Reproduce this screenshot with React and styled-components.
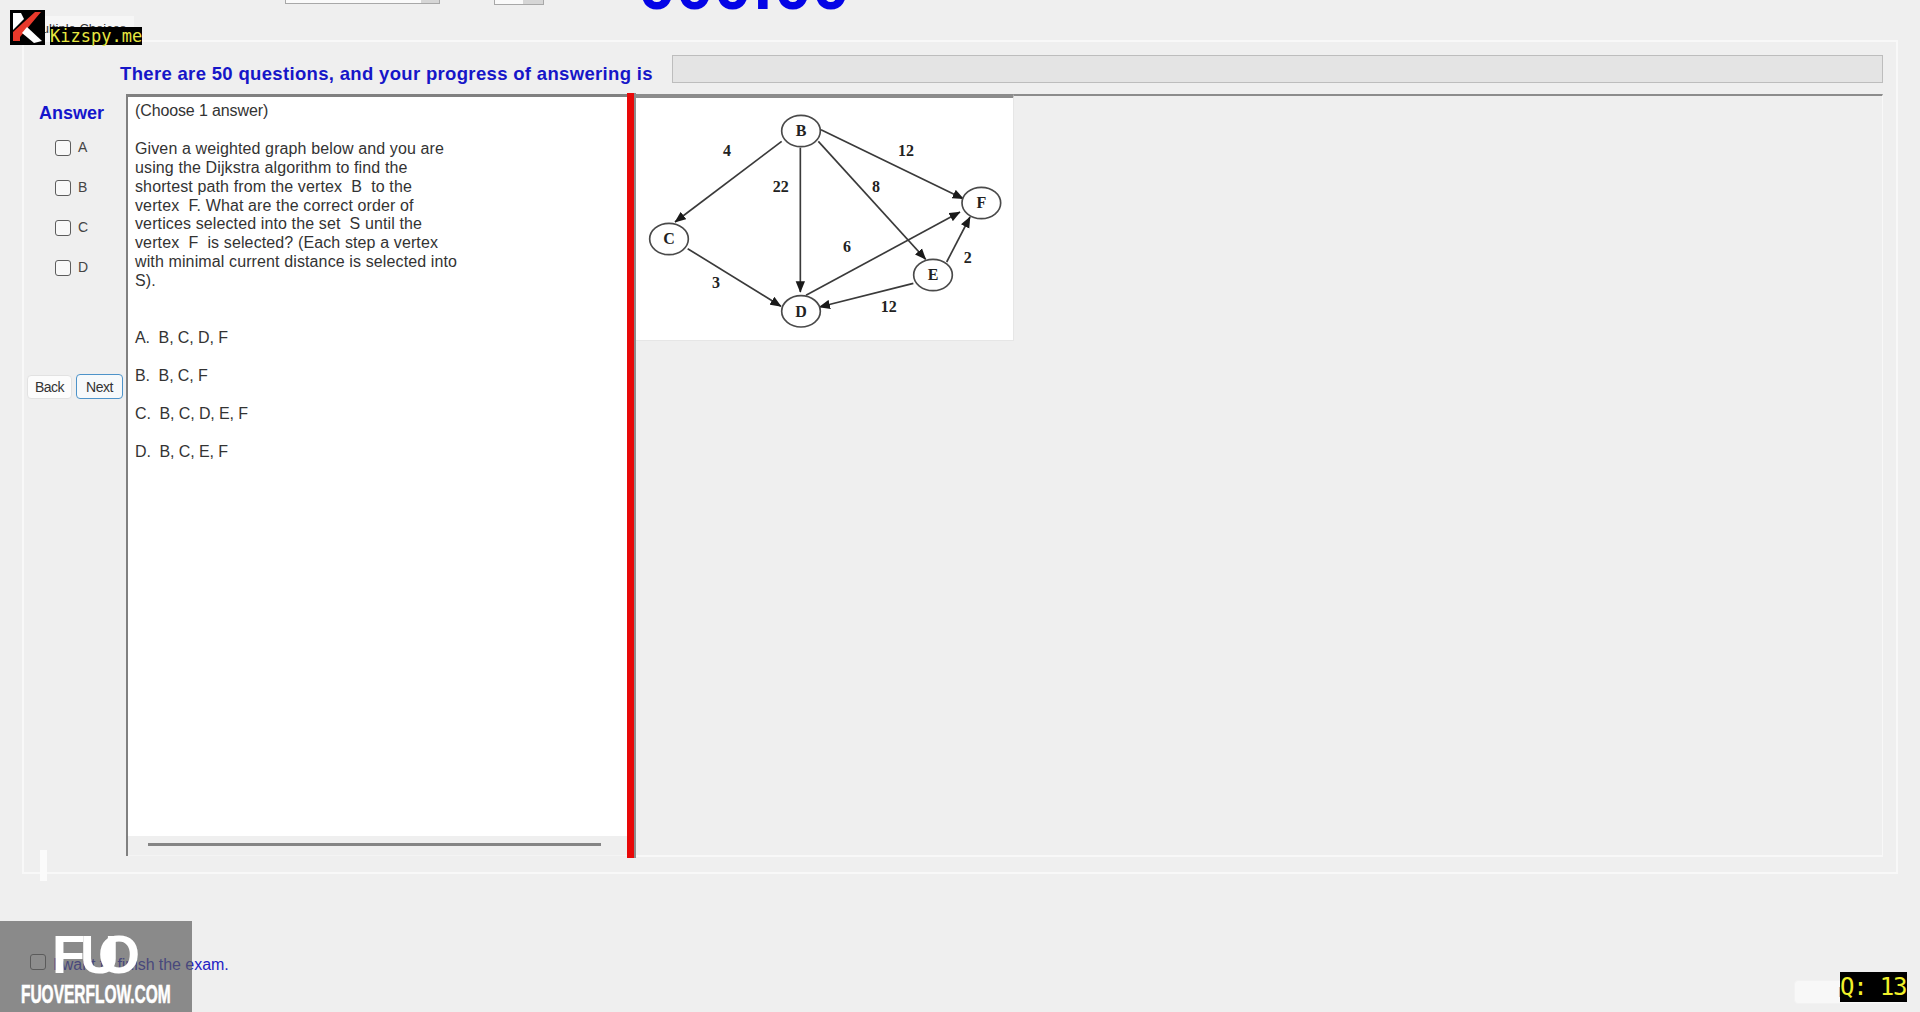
import React from "react";
import styled, { createGlobalStyle } from "styled-components";

const Global = createGlobalStyle`
  html, body { margin: 0; padding: 0; background: #efefef; }
  body { font-family: "Liberation Sans", Arial, sans-serif; }
`;

const Page = styled.div`
  position: relative;
  width: 1920px;
  height: 1012px;
  overflow: hidden;
  display: flex;
  flex-direction: column;
  background: #efefef;
`;

const TopBar = styled.div`
  height: 16px;
  display: flex;
  align-items: flex-start;
  padding-left: 285px;
`;

const Combo = styled.div`
  width: ${(p) => p.$w}px;
  height: ${(p) => p.$h}px;
  margin-right: ${(p) => p.$mr}px;
  box-sizing: border-box;
  background: #fafafa;
  border: 1px solid #a8a8a8;
  border-top: 0;
  display: flex;
  justify-content: flex-end;
`;

const ComboArrow = styled.div`
  width: ${(p) => p.$w}px;
  background: #d6d6d6;
`;

const Timer = styled.div`
  font-size: 68px;
  font-weight: 700;
  line-height: 68px;
  margin-top: -49px;
  color: #0404e6;
`;

const TabRow = styled.div`
  height: 24px;
  padding-left: 22px;
  display: flex;
`;

const Tab = styled.div`
  width: 112px;
  box-sizing: border-box;
  background: #f6f6f6;
  font-size: 13px;
  color: #333;
  padding: 5px 0 0 9px;
  white-space: nowrap;
`;

const Panel = styled.div`
  position: relative;
  width: 1876px;
  height: 834px;
  margin-left: 22px;
  box-sizing: border-box;
  border: 2px solid #f8f8f8;
  display: flex;
  flex-direction: column;
`;

const Tick = styled.div`
  position: absolute;
  left: 16px;
  bottom: -9px;
  width: 7px;
  height: 31px;
  background: #fbfbfb;
`;

const Header = styled.div`
  height: 28px;
  margin-top: 13px;
  padding: 0 13px 0 96px;
  display: flex;
  align-items: center;
`;

const HeaderText = styled.div`
  font-size: 18.5px;
  font-weight: 700;
  letter-spacing: 0.33px;
  margin-top: 10px;
  color: #1616c8;
  white-space: nowrap;
  width: 552px;
`;

const Progress = styled.div`
  flex: 1;
  height: 100%;
  box-sizing: border-box;
  background: #e4e4e4;
  border: 1px solid #bdbdbd;
`;

const Content = styled.div`
  height: 765px;
  margin-top: 10px;
  display: flex;
`;

const AnswerCol = styled.div`
  width: 102px;
  flex: none;
  display: flex;
  flex-direction: column;
`;

const AnswerTitle = styled.div`
  margin: 10px 0 0 15px;
  height: 20px;
  line-height: 20px;
  font-size: 18px;
  font-weight: 700;
  color: #1515cc;
`;

const ChoiceList = styled.div`
  margin: 17px 0 0 31px;
  display: flex;
  flex-direction: column;
  gap: 24px;
`;

const Choice = styled.label`
  height: 16px;
  display: flex;
  gap: 7px;
  font-size: 14px;
  line-height: 14px;
  color: #444;
`;

const Check = styled.input.attrs({ type: "checkbox" })`
  appearance: none;
  margin: 0;
  width: 16px;
  height: 16px;
  flex: none;
  box-sizing: border-box;
  background: #f8f8f8;
  border: 1.5px solid #5d5d5d;
  border-radius: 3px;
`;

const NavRow = styled.div`
  margin: 98px 0 0 3px;
  display: flex;
  align-items: center;
  gap: 4px;
`;

const NavButton = styled.button`
  width: ${(p) => (p.$primary ? 47 : 45)}px;
  height: ${(p) => (p.$primary ? 25 : 24)}px;
  padding: 0;
  box-sizing: border-box;
  font-family: inherit;
  font-size: 14px;
  letter-spacing: -0.5px;
  color: #333;
  background: ${(p) => (p.$primary ? "#f6f9fb" : "#fcfcfc")};
  border: ${(p) => (p.$primary ? "1.5px solid #4d93c9" : "1px solid #e2e2e2")};
  border-radius: 4px;
`;

const QuestionBox = styled.div`
  width: 501px;
  flex: none;
  margin-top: 1px;
  box-sizing: border-box;
  border-top: 3px solid #808080;
  border-left: 2px solid #808080;
  display: flex;
  flex-direction: column;
  height: 762px;
`;

const QuestionBody = styled.div`
  flex: 1;
  background: #fff;
  padding: 4px 0 0 7px;
  font-size: 16px;
  color: #333;
  white-space: pre;
`;

const QuestionLine = styled.div`
  line-height: 20px;
  letter-spacing: -0.12px;
`;

const QuestionText = styled.div`
  margin-top: 19px;
  line-height: 18.85px;
  letter-spacing: 0.12px;
`;

const OptionList = styled.div`
  margin-top: 37px;
  display: flex;
  flex-direction: column;
  gap: 18px;
`;

const Option = styled.div`
  line-height: 20px;
  height: 20px;
  letter-spacing: -0.1px;
`;

const ScrollTrack = styled.div`
  height: 20px;
  flex: none;
  padding: 7px 26px 0 20px;
  box-sizing: border-box;
  border-bottom: 1px solid #f4f4f4;
`;

const ScrollThumb = styled.div`
  height: 3px;
  background: #858585;
`;

const Splitter = styled.div`
  width: 9px;
  flex: none;
  height: 765px;
  box-sizing: border-box;
  background: #e80808;
  border-right: 2px solid #8c8c8c;
`;

const RightPane = styled.div`
  flex: 0 0 1247px;
  margin-top: 1px;
  height: 763px;
  box-sizing: border-box;
  border-top: 2px solid #8c8c8c;
  border-right: 1px solid #f8f8f8;
  border-bottom: 2px solid #f8f8f8;
`;

const GraphFrame = styled.div`
  width: 378px;
  height: 247px;
  box-sizing: border-box;
  background: #fff;
  border-top: 4px solid #8c8c8c;
  margin-top: -2px;
  border-right: 1px solid #e6e6e6;
  border-bottom: 1px solid #e6e6e6;
`;

const Footer = styled.div`
  flex: 1;
  display: flex;
  justify-content: space-between;
  align-items: flex-start;
`;

const FinishRow = styled.label`
  margin: 80px 0 0 30px;
  display: flex;
  align-items: flex-start;
  gap: 7px;
  font-size: 16px;
  line-height: 18px;
  letter-spacing: -0.05px;
  color: #2222c4;
`;

const FinishText = styled.span`
  margin-top: 2px;
`;

const FinishButton = styled.button`
  width: 112px;
  height: 24px;
  margin: 106px 14px 0 0;
  padding: 0;
  font-family: inherit;
  font-size: 14px;
  color: #999;
  background: #f8f8f8;
  border: 1px solid #f2f2f2;
  border-radius: 4px;
`;

const BrandBlock = styled.div`
  position: absolute;
  left: 10px;
  top: 10px;
  display: flex;
  align-items: flex-end;
  gap: 5px;
`;

const BrandLabel = styled.div`
  background: #000;
  color: #e6e640;
  font-family: "DejaVu Sans Mono", monospace;
  font-size: 17px;
  line-height: 18px;
  height: 18px;
  width: 92px;
  text-align: center;
  white-space: nowrap;
`;

const FuoMark = styled.div`
  position: absolute;
  left: 0;
  top: 921px;
  width: 192px;
  height: 91px;
  background: rgba(90, 90, 90, 0.68);
  display: flex;
  flex-direction: column;
  align-items: center;
`;

const FuoLogo = styled.div`
  align-self: flex-start;
  margin: 6px 0 0 52px;
  height: 54px;
  font-size: 54px;
  line-height: 54px;
  font-weight: 700;
  color: #fff;
`;

const FuoLetter = styled.span`
  letter-spacing: ${(p) => p.$track}px;
`;

const FuoSite = styled.div`
  margin-top: 0;
  font-size: 25px;
  line-height: 26px;
  font-weight: 700;
  color: #fff;
  white-space: nowrap;
  transform: scaleX(0.62);
  -webkit-text-stroke: 0.6px #fff;
`;

const QBadge = styled.div`
  position: absolute;
  left: 1840px;
  top: 972px;
  width: 67px;
  height: 30px;
  background: #000;
  color: #f0f02a;
  font-family: "DejaVu Sans Mono", monospace;
  font-size: 24px;
  letter-spacing: -1.2px;
  line-height: 30px;
  white-space: nowrap;
`;

const nodes = [
  ["B", 543, 137],
  ["C", 147, 461],
  ["F", 1084, 353],
  ["E", 939, 569],
  ["D", 543, 678],
];

const edges = [
  [485, 168, 165, 410],
  [541, 187, 541, 620],
  [595, 168, 917, 522],
  [603, 133, 1030, 340],
  [203, 490, 483, 663],
  [558, 630, 1020, 380],
  [980, 530, 1050, 395],
  [880, 594, 598, 665],
];

const weights = [
  ["4", 321, 196],
  ["22", 482, 303],
  ["8", 768, 303],
  ["12", 858, 195],
  ["6", 681, 484],
  ["3", 288, 593],
  ["2", 1043, 517],
  ["12", 806, 663],
];

function Graph() {
  const font = { fontFamily: "Liberation Serif, serif", fontWeight: 700, fontSize: 48, textAnchor: "middle", dominantBaseline: "central", fill: "#222" };
  return (
    <svg width="377" height="243" viewBox="48 38 1131 729" style={{ display: "block" }}>
      <defs>
        <marker id="arrow" markerUnits="userSpaceOnUse" markerWidth="34" markerHeight="30" refX="32" refY="15" orient="auto">
          <path d="M0 1 L34 15 L0 29 Z" fill="#1a1a1a" />
        </marker>
      </defs>
      {edges.map((e, i) => (
        <line key={i} x1={e[0]} y1={e[1]} x2={e[2]} y2={e[3]} stroke="#3a3a3a" strokeWidth="5" markerEnd="url(#arrow)" />
      ))}
      {nodes.map(([n, x, y]) => (
        <g key={n}>
          <ellipse cx={x} cy={y} rx="58" ry="47" fill="#fff" stroke="#4a4a4a" strokeWidth="5" />
          <text x={x} y={y} style={font}>{n}</text>
        </g>
      ))}
      {weights.map(([t, x, y], i) => (
        <text key={i} x={x} y={y} style={font}>{t}</text>
      ))}
    </svg>
  );
}

function KLogo() {
  return (
    <svg width="35" height="35" viewBox="0 0 35 35" style={{ display: "block" }}>
      <rect width="35" height="35" fill="#000" />
      <path d="M3 3 H11 L14 9 L3 20 Z" fill="#fff" />
      <path d="M25 2 H31 L10 27 V31 H3 V22 Z" fill="#e8392b" />
      <path d="M17 17 L32 31 L24 33 L12 23 Z" fill="#fff" />
    </svg>
  );
}

const questionText = `Given a weighted graph below and you are
using the Dijkstra algorithm to find the
shortest path from the vertex  B  to the
vertex  F. What are the correct order of
vertices selected into the set  S until the
vertex  F  is selected? (Each step a vertex
with minimal current distance is selected into
S).`;

export default function App() {
  return (
    <Page>
      <Global />
      <TopBar>
        <Combo $w={155} $h={4} $mr={54}><ComboArrow $w={18} /></Combo>
        <Combo $w={50} $h={5} $mr={94}><ComboArrow $w={20} /></Combo>
        <Timer>000:00</Timer>
      </TopBar>
      <TabRow>
        <Tab>Multiple Choices</Tab>
      </TabRow>
      <Panel>
        <Header>
          <HeaderText>There are 50 questions, and your progress of answering is</HeaderText>
          <Progress />
        </Header>
        <Content>
          <AnswerCol>
            <AnswerTitle>Answer</AnswerTitle>
            <ChoiceList>
              {["A", "B", "C", "D"].map((c) => (
                <Choice key={c}><Check />{c}</Choice>
              ))}
            </ChoiceList>
            <NavRow>
              <NavButton>Back</NavButton>
              <NavButton $primary>Next</NavButton>
            </NavRow>
          </AnswerCol>
          <QuestionBox>
            <QuestionBody>
              <QuestionLine>(Choose 1 answer)</QuestionLine>
              <QuestionText>{questionText}</QuestionText>
              <OptionList>
                <Option>A.  B, C, D, F</Option>
                <Option>B.  B, C, F</Option>
                <Option>C.  B, C, D, E, F</Option>
                <Option>D.  B, C, E, F</Option>
              </OptionList>
            </QuestionBody>
            <ScrollTrack><ScrollThumb /></ScrollTrack>
          </QuestionBox>
          <Splitter />
          <RightPane>
            <GraphFrame><Graph /></GraphFrame>
          </RightPane>
        </Content>
        <Tick />
      </Panel>
      <Footer>
        <FinishRow><Check /><FinishText>I want to finish the exam.</FinishText></FinishRow>
        <FinishButton>Exit</FinishButton>
      </Footer>
      <BrandBlock>
        <KLogo />
        <BrandLabel>Kizspy.me</BrandLabel>
      </BrandBlock>
      <FuoMark>
        <FuoLogo>
          <FuoLetter $track={-5}>F</FuoLetter>
          <FuoLetter $track={-21}>U</FuoLetter>
          <FuoLetter $track={0}>O</FuoLetter>
        </FuoLogo>
        <FuoSite>FUOVERFLOW.COM</FuoSite>
      </FuoMark>
      <QBadge>Q: 13</QBadge>
    </Page>
  );
}
